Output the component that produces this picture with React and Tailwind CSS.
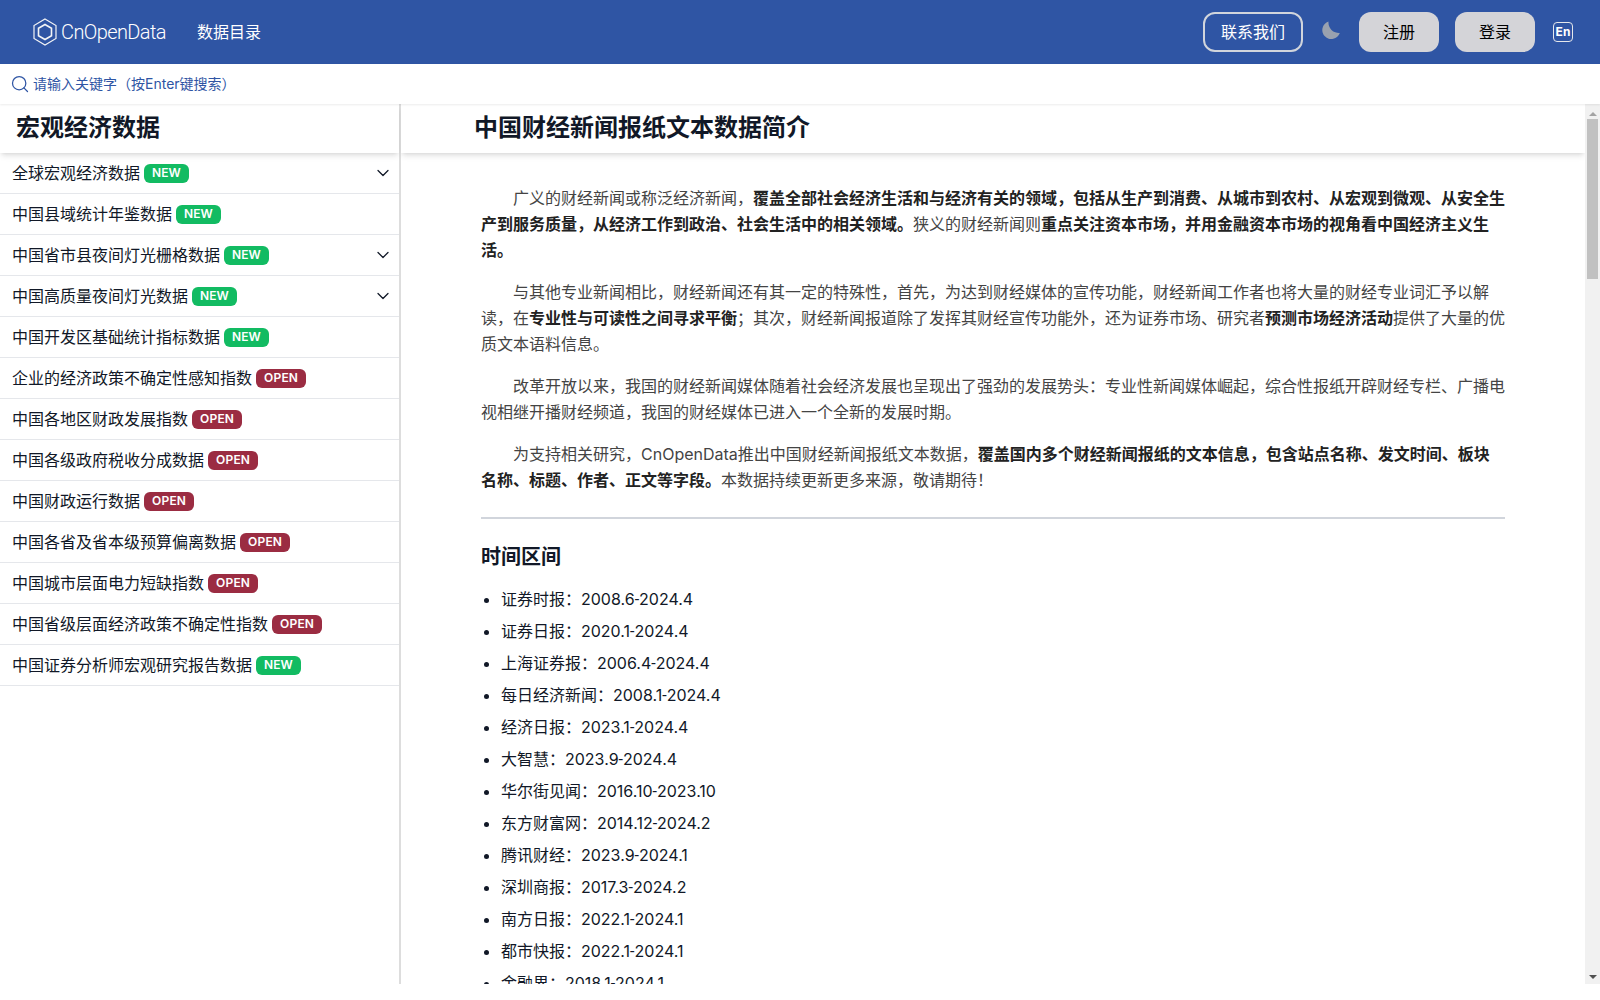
import React from 'react';
import { ChevronDown, Search } from "lucide-react";

const sidebarItems = [
  { name: "全球宏观经济数据", tag: "NEW", sub: true },
  { name: "中国县域统计年鉴数据", tag: "NEW" },
  { name: "中国省市县夜间灯光栅格数据", tag: "NEW", sub: true },
  { name: "中国高质量夜间灯光数据", tag: "NEW", sub: true },
  { name: "中国开发区基础统计指标数据", tag: "NEW" },
  { name: "企业的经济政策不确定性感知指数", tag: "OPEN" },
  { name: "中国各地区财政发展指数", tag: "OPEN" },
  { name: "中国各级政府税收分成数据", tag: "OPEN" },
  { name: "中国财政运行数据", tag: "OPEN" },
  { name: "中国各省及省本级预算偏离数据", tag: "OPEN" },
  { name: "中国城市层面电力短缺指数", tag: "OPEN" },
  { name: "中国省级层面经济政策不确定性指数", tag: "OPEN" },
  { name: "中国证券分析师宏观研究报告数据", tag: "NEW" },
];

const periods = [
  ["证券时报：2008.6", "2024.4"],
  ["证券日报：2020.1", "2024.4"],
  ["上海证券报：2006.4", "2024.4"],
  ["每日经济新闻：2008.1", "2024.4"],
  ["经济日报：2023.1", "2024.4"],
  ["大智慧：2023.9", "2024.4"],
  ["华尔街见闻：2016.10", "2023.10"],
  ["东方财富网：2014.12", "2024.2"],
  ["腾讯财经：2023.9", "2024.1"],
  ["深圳商报：2017.3", "2024.2"],
  ["南方日报：2022.1", "2024.1"],
  ["都市快报：2022.1", "2024.1"],
  ["金融界：2018.1", "2024.1"],
];

function Logo() {
  return (
    <svg width="24" height="28" viewBox="0 0 24 28" fill="none" stroke="currentColor" className="text-gray-100">
      <path d="M12 1 L23 7.5 V20.5 L12 27 L1 20.5 V7.5 Z" strokeWidth="1.2" />
      <path d="M12 6.5 L18.5 10.2 V17.8 L12 21.5 L5.5 17.8 V10.2 Z" strokeWidth="1.6" />
    </svg>
  );
}

function Scrollbar() {
  return (
    <div className="w-[15px] shrink-0 bg-[#f1f1f1] flex flex-col items-center">
      <svg width="8" height="4" viewBox="0 0 8 4" className="mt-[8px] shrink-0 fill-[#a3a3a3]">
        <path d="M4 0 L8 4 H0 Z" />
      </svg>
      <div className="mt-[3px] w-[11px] h-[160px] bg-[#c1c1c1]" />
      <svg width="8" height="4" viewBox="0 0 8 4" className="mt-auto mb-[5px] shrink-0 fill-[#505050]">
        <path d="M4 4 L0 0 H8 Z" />
      </svg>
    </div>
  );
}

export default function App() {
  return (
    <div className="h-screen flex flex-col pb-4 bg-white text-[#111827] overflow-hidden font-['Inter','Noto_Sans_CJK_SC',sans-serif]" lang="zh-CN">
      <header className="h-16 shrink-0 bg-[#2f55a4] flex items-center pl-[33px] pr-[27px] text-white">
        <div className="flex items-center gap-1">
          <Logo />
          <span className="text-[20px] tracking-[-0.6px] font-['Roboto',sans-serif] font-light">CnOpenData</span>
        </div>
        <a className="ml-[31px] text-base">数据目录</a>
        <div className="ml-auto flex items-center">
          <button className="w-[100px] h-10 rounded-xl border-2 border-gray-300 text-base text-white">联系我们</button>
          <svg viewBox="0 0 18 18" className="w-[18px] h-[18px] ml-[19px] mb-1 fill-gray-400">
            <path d="M6.5 0.5 A9 9 0 1 0 17.8 12 A10.5 10.5 0 0 1 6.5 0.5 Z" />
          </svg>
          <button className="ml-[19px] w-20 h-10 rounded-xl bg-[#d4d4d8] text-base text-black">注册</button>
          <button className="ml-4 w-20 h-10 rounded-xl bg-[#d4d4d8] text-base text-black">登录</button>
          <div className="ml-[18px] w-5 h-5 border-[1.5px] border-gray-200 rounded-sm flex items-center justify-center text-xs font-bold">En</div>
        </div>
      </header>

      <div className="relative z-10 h-10 shrink-0 flex items-center gap-[3px] pl-[10px] bg-white text-sm text-[#2f55a4] shadow-[0_1px_2px_rgba(0,0,0,0.08)]">
        <Search className="w-5 h-5 stroke-[1.5]" />
        <span>请输入关键字（按Enter键搜索）</span>
      </div>

      <div className="flex-1 min-h-0 flex">
        <aside className="w-[401px] shrink-0 border-r-2 border-[#dddddd]">
          <div className="h-[49px] pb-0.5 flex items-center pl-4 text-2xl font-bold shadow-md">宏观经济数据</div>
          {sidebarItems.map((item) => (
            <div key={item.name} className="h-[41px] flex items-center pl-3 pr-1.5 border-b border-gray-200 text-base">
              <span>{item.name}</span>
              <span className={`ml-1 px-2 h-[19px] rounded-md text-xs font-semibold text-white flex items-center ${item.tag === "NEW" ? "bg-[#12bb62]" : "bg-[#9b2c42] tracking-[0.2px]"}`}>
                {item.tag}
              </span>
              {item.sub && <ChevronDown className="w-5 h-5 ml-auto stroke-[1.5]" />}
            </div>
          ))}
        </aside>

        <main className="flex-1 min-w-0 overflow-hidden">
          <div className="h-[49px] pb-0.5 bg-white flex items-center pl-[73px] text-2xl font-bold shadow-md">
            中国财经新闻报纸文本数据简介
          </div>
          <div className="pt-8 pl-20 pr-[79.9px] text-base">
            <p className="leading-[26px] indent-8 text-[#444444] mb-4">
              广义的财经新闻或称泛经济新闻，<strong className="text-[#222222]">覆盖全部社会经济生活和与经济有关的领域，包括从生产到消费、从城市到农村、从宏观到微观、从安全生产到服务质量，从经济工作到政治、社会生活中的相关领域。</strong>狭义的财经新闻则<strong className="text-[#222222]">重点关注资本市场，并用金融资本市场的视角看中国经济主义生活。</strong>
            </p>
            <p className="leading-[26px] indent-8 text-[#444444] mb-4">
              与其他专业新闻相比，财经新闻还有其一定的特殊性，首先，为达到财经媒体的宣传功能，财经新闻工作者也将大量的财经专业词汇予以解读，在<strong className="text-[#222222]">专业性与可读性之间寻求平衡</strong>；其次，财经新闻报道除了发挥其财经宣传功能外，还为证券市场、研究者<strong className="text-[#222222]">预测市场经济活动</strong>提供了大量的优质文本语料信息。
            </p>
            <p className="leading-[26px] indent-8 text-[#444444] mb-4">
              改革开放以来，我国的财经新闻媒体随着社会经济发展也呈现出了强劲的发展势头：专业性新闻媒体崛起，综合性报纸开辟财经专栏、广播电视相继开播财经频道，我国的财经媒体已进入一个全新的发展时期。
            </p>
            <p className="leading-[26px] indent-8 text-[#444444]">
              为支持相关研究，CnOpenData推出中国财经新闻报纸文本数据，<strong className="text-[#222222]">覆盖国内多个财经新闻报纸的文本信息，包含站点名称、发文时间、板块名称、标题、作者、正文等字段。</strong>本数据持续更新更多来源，敬请期待！
            </p>
            <hr className="mt-6 border-t-2 border-gray-300" />
            <h3 className="mt-6 text-[20px] leading-7 font-semibold">时间区间</h3>
            <ul className="mt-3 list-disc pl-5">
              {periods.map(([from, to]) => (
                <li key={from} className="h-8 leading-8">
                  {from}<span className="font-['Roboto',sans-serif]">-</span>{to}
                </li>
              ))}
            </ul>
          </div>
        </main>

        <Scrollbar />
      </div>
    </div>
  );
}
